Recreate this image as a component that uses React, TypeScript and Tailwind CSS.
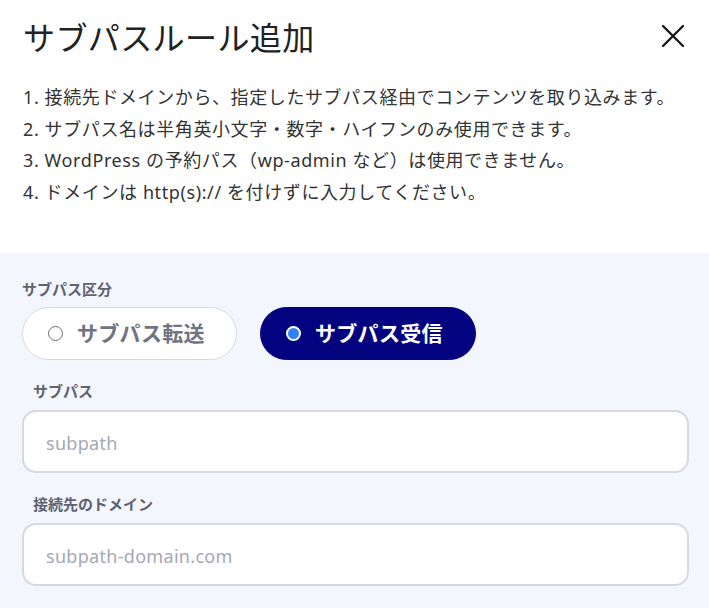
import { useState } from 'react';

const FONT = '"Noto Sans", "Noto Sans CJK JP", sans-serif';

const NOTES = [
  '1. 接続先ドメインから、指定したサブパス経由でコンテンツを取り込みます。',
  '2. サブパス名は半角英小文字・数字・ハイフンのみ使用できます。',
  '3. WordPress の予約パス（wp-admin など）は使用できません。',
  '4. ドメインは http(s):// を付けずに入力してください。',
];

function CloseIcon() {
  return (
    <svg width="24" height="24" viewBox="0 0 24 24" fill="none" stroke="#1a1a1a" strokeWidth="2.4" strokeLinecap="round">
      <path d="M2 2 L22 22 M22 2 L2 22" />
    </svg>
  );
}

function Field({ label, placeholder }: { label: string; placeholder: string }) {
  return (
    <div className="flex flex-col">
      <label className="pl-[11px] text-[15px] font-bold leading-[22px] text-[#5f6370]">{label}</label>
      <input
        placeholder={placeholder}
        className="mt-[8px] h-[63px] w-full rounded-[14px] border-2 border-[#d5d9e3] bg-white px-[22px] pt-[2px] text-[18px] tracking-[0.3px] text-[#333] outline-none placeholder:text-[#a4a8b4]"
        style={{ fontFamily: FONT }}
      />
    </div>
  );
}

export default function App() {
  const [mode, setMode] = useState<'send' | 'receive'>('receive');

  return (
    <div className="h-[616px] w-[709px] bg-white" style={{ fontFamily: FONT }}>
      {/* Header */}
      <div className="flex items-start justify-between pl-[23px] pr-[24px] pt-[16px]">
        <h1 className="text-[32px] font-normal leading-[44px] tracking-[0.4px] text-[#222]">サブパスルール追加</h1>
        <button className="mt-[8px]" aria-label="閉じる">
          <CloseIcon />
        </button>
      </div>

      {/* Notes */}
      <ul className="mt-[22px] px-[23px] text-[18px] leading-[31.5px] tracking-[0.6px] text-[#333]">
        {NOTES.map((n) => (
          <li key={n}>{n}</li>
        ))}
      </ul>

      {/* Form */}
      <div className="mt-[45px] flex flex-col bg-[#f3f6fd] pb-[22px] pl-[22px] pr-[20px] pt-[25px]">
        <div className="text-[15px] font-bold leading-[22px] text-[#60646f]">サブパス区分</div>
        <div className="mt-[7px] flex gap-[23px]">
          <button
            onClick={() => setMode('send')}
            className={`flex h-[53px] w-[215px] items-center gap-[14px] rounded-full border px-[25px] text-[21px] font-bold tracking-[0.3px] ${
              mode === 'send' ? 'border-[#03037f] bg-[#03037f] text-white' : 'border-[#d6dae3] bg-white text-[#707482]'
            }`}
          >
            <span
              className={`h-[15px] w-[15px] rounded-full ${
                mode === 'send' ? 'border-2 border-white bg-[#2f80ff]' : 'border-[1.5px] border-[#6b6f7a]'
              }`}
            />
            サブパス転送
          </button>
          <button
            onClick={() => setMode('receive')}
            className={`flex h-[53px] w-[216px] items-center gap-[14px] rounded-full border px-[25px] text-[21px] font-bold tracking-[0.3px] ${
              mode === 'receive' ? 'border-[#03037f] bg-[#03037f] text-white' : 'border-[#d6dae3] bg-white text-[#707482]'
            }`}
          >
            <span
              className={`h-[15px] w-[15px] rounded-full ${
                mode === 'receive' ? 'border-2 border-white bg-[#2f80ff]' : 'border-[1.5px] border-[#6b6f7a]'
              }`}
            />
            サブパス受信
          </button>
        </div>

        <div className="mt-[20px] flex flex-col gap-[20px]">
          <Field label="サブパス" placeholder="subpath" />
          <Field label="接続先のドメイン" placeholder="subpath-domain.com" />
        </div>
      </div>
    </div>
  );
}
